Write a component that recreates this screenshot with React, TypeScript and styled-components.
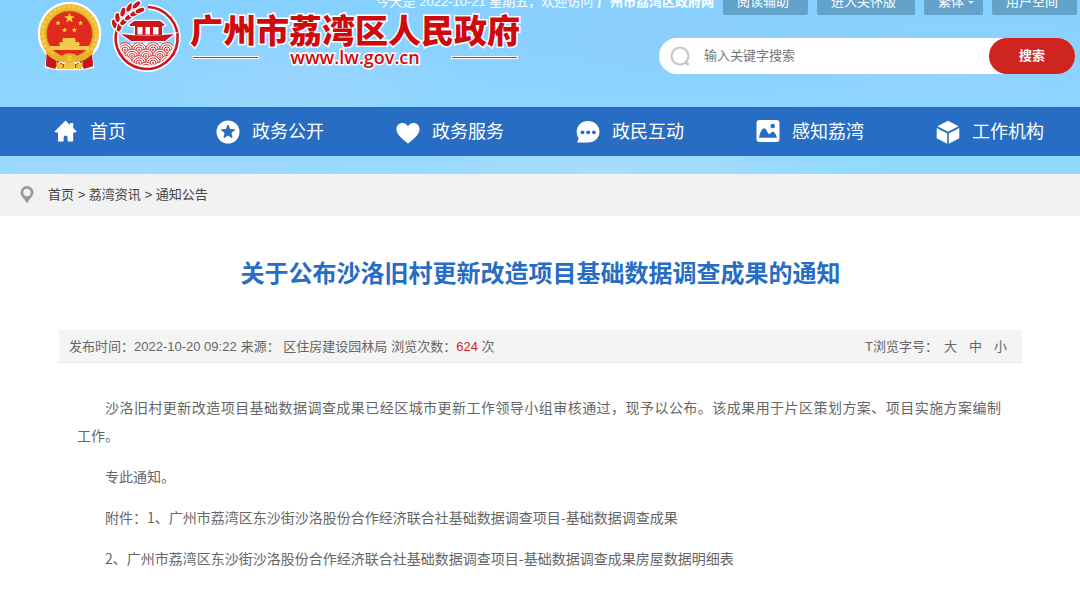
import React from "react";
import styled, { createGlobalStyle } from "styled-components";

const sans = `"Liberation Sans", "Noto Sans CJK SC", sans-serif`;
const cjk = `"Noto Sans CJK SC", sans-serif`;

const GlobalStyle = createGlobalStyle`
  *, *::before, *::after { box-sizing: border-box; }
  body { margin: 0; background: #fff; font-family: ${sans}; color: #666; }
  a { color: inherit; text-decoration: none; }
`;

const Header = styled.header`
  padding-bottom: 18px;
  background:
    radial-gradient(ellipse 200px 60px at 27% 50%, rgba(164, 214, 255, 0.6), transparent),
    radial-gradient(ellipse 260px 70px at 62% 22%, rgba(142, 205, 252, 0.7), transparent),
    radial-gradient(ellipse 240px 60px at 88% 40%, rgba(150, 208, 255, 0.6), transparent),
    radial-gradient(ellipse 340px 40px at 14% 100%, rgba(166, 218, 255, 0.9), transparent),
    radial-gradient(ellipse 300px 40px at 56% 100%, rgba(172, 222, 255, 0.9), transparent),
    linear-gradient(#86d0ff, #90daff);
`;

const TopBar = styled.div`
  display: flex;
  justify-content: flex-end;
  align-items: flex-end;
  gap: 9px;
  height: 15px;
  padding-right: 3px;
  overflow: hidden;
  font-size: 13px;
  line-height: 27px;
  color: #fff;
`;

const Greeting = styled.span`
  white-space: nowrap;
`;

const TopButton = styled.button<{ $menu?: boolean }>`
  height: 27px;
  padding: 0 ${(p) => (p.$menu ? 9 : 19)}px 0 14px;
  border: 0;
  border-radius: 2px;
  background: #63a2c9;
  color: #fff;
  font: 13px/27px ${sans};
  white-space: nowrap;
`;

const Caret = styled.span`
  display: inline-block;
  margin-left: 4px;
  vertical-align: middle;
  border: 3px solid transparent;
  border-top-color: #d4e6f1;
  border-bottom: 0;
`;

const Masthead = styled.div`
  display: flex;
  justify-content: space-between;
  height: 92px;
  padding: 0 5px 0 36px;
`;

const Brand = styled.a`
  display: flex;
  gap: 9px;
  margin-top: -15px;
`;

const Logo = styled.svg`
  flex: none;
  overflow: visible;
`;

const BrandText = styled.span`
  display: flex;
  flex-direction: column;
  padding-top: 10px;
  color: #cf0a0c;
  -webkit-text-stroke: 3px #fff;
  paint-order: stroke fill;
`;

const BrandName = styled.span`
  font: 900 33px/38px ${cjk};
  white-space: nowrap;
`;

const BrandUrl = styled.span`
  display: flex;
  align-items: center;
  justify-content: space-between;
  padding: 0 2px;
  font: 600 18px/18px "Open Sans", sans-serif;
`;

const Rule = styled.span`
  width: 67px;
  height: 3px;
  border: 1px solid #fff;
  background: #e02020;
`;

const Search = styled.form`
  display: flex;
  align-items: center;
  width: 416px;
  height: 36px;
  margin-top: 23px;
  padding-left: 10px;
  border-radius: 18px;
  background: #fff;
`;

const SearchInput = styled.input`
  flex: 1;
  min-width: 0;
  margin-left: 11px;
  padding: 0;
  border: 0;
  outline: 0;
  background: transparent;
  font: 13px/20px ${sans};
  &::placeholder { color: #777; opacity: 1; }
`;

const SearchButton = styled.button`
  width: 86px;
  height: 36px;
  border: 0;
  border-radius: 18px;
  background: #cf2520;
  color: #fff;
  font: 700 13px/20px ${sans};
`;

const Nav = styled.nav`
  display: grid;
  grid-template-columns: repeat(6, 1fr);
  background: #276dc3;
`;

const NavLink = styled.a`
  display: flex;
  align-items: center;
  justify-content: center;
  gap: 12px;
  height: 49px;
  color: #fff;
  font-size: 18px;
  line-height: 24px;
  white-space: nowrap;
`;

const Breadcrumb = styled.nav`
  display: flex;
  align-items: center;
  gap: 14px;
  height: 42px;
  padding: 0 20px;
  background: #f2f2f2;
  color: #444;
  font: 13px/18px ${sans};
`;

const Article = styled.article`
  padding: 36px 58px 23px 59px;
`;

const Title = styled.h1`
  margin: 0 0 38px;
  color: #276dc3;
  font: 700 24px/40px ${cjk};
  text-align: center;
`;

const Meta = styled.div`
  display: flex;
  justify-content: space-between;
  height: 33px;
  padding: 0 15px 0 10px;
  border-bottom: 1px solid #e9e9e9;
  background: #f4f4f4;
  font-size: 13px;
  line-height: 33px;
`;

const MetaGroup = styled.div<{ $gap: number }>`
  display: flex;
  gap: ${(p) => p.$gap}px;
`;

const Views = styled.span`
  color: #cf2520;
`;

const SizeButton = styled.button`
  padding: 0;
  border: 0;
  background: none;
  color: inherit;
  font: 13px/33px ${sans};
`;

const Body = styled.div`
  padding: 30px 21px 0 18px;
  color: #666;
  font: 14px/28px ${cjk};
`;

const Paragraph = styled.p`
  margin: 0 0 13px;
  text-indent: 2em;
  text-align: justify;
`;

const Together = styled.span`
  white-space: nowrap;
`;

function starPoints(cx: number, cy: number, r: number) {
  return Array.from({ length: 10 }, (_, i) => {
    const a = (Math.PI / 5) * i - Math.PI / 2;
    const d = i % 2 ? r * 0.42 : r;
    return `${(cx + d * Math.cos(a)).toFixed(2)},${(cy + d * Math.sin(a)).toFixed(2)}`;
  }).join(" ");
}

function NationalEmblem() {
  return (
    <Logo width="67" height="72" viewBox="-2 -3 67 72" aria-hidden="true">
      <path d="M31.500 0C14 0 1 14 1 31c0 9 4 16 9 21l-2 12 12 2h23l12-2-2-12c6-5 9-12 9-21C62 14 49 0 31.500 0Z" fill="#fff" stroke="#fff" strokeWidth="2.500" />
      <path d="M9 46 8 63l9 3 5-9h19l5 9 9-3-2-17Z" fill="#c8141c" />
      <circle cx="31.500" cy="30.500" r="29.500" fill="#edb92e" />
      <circle cx="31.500" cy="30.500" r="27" fill="none" stroke="#f5cc4a" strokeWidth="3" strokeDasharray="3 2" />
      <circle cx="31.500" cy="31" r="23" fill="#e02a1d" stroke="#c98a18" />
      <polygon points={starPoints(31.5, 15, 5.5)} fill="#fbd437" />
      {[[20, 20], [42.5, 20], [26.7, 27], [36.3, 27]].map(([x, y]) => (
        <polygon key={x} points={starPoints(x, y, 2.8)} fill="#fbd437" />
      ))}
      <path d="M25 35h12l1 3h-1v1h4l1 3h-1v1h10v4H12v-4h10v-1h-1l1-3h3v-1h-1Z" fill="#f7c94a" />
      <path d="M9 47c5 4 9 5 14 7 3-5 14-5 17 0 5-2 9-3 14-7l1 3c-4 5-9 8-15 9l-8-3-9 3C17 58 12 55 8 50Z" fill="#e7b22a" />
      <path d="m9 52 8 6-3 7-6-2Zm45 0-8 6 3 7 6-2Z" fill="#c8141c" />
      <path d="M18 58c3 4 7 4 9 2l-2 6h-6Zm27 0c-3 4-7 4-9 2l2 6h6ZM27 60l4-3 5 3 1 6H26Z" fill="#f3c63a" />
      <circle cx="31.500" cy="55.500" r="4" fill="#f3c63a" stroke="#d9a024" />
      <path d="m22 60 4 2-1 3m16-5-4 2 1 3" fill="none" stroke="#c8141c" />
    </Logo>
  );
}

const waves = [48, 54.5, 61, 67.5].flatMap((y, row) =>
  [0, 1, 2, 3, 4, 5].map((i) => ({ y, x: i * 14 - 1 + (row % 2) * 7 }))
);

const grains = [
  [2.5, 22, -18], [5.5, 15.5, -2], [11, 10, 18], [17.5, 5.5, 32], [24.5, 2.8, 48],
  [7.5, 25, 20], [12, 19.5, 48], [17, 15, 56], [22.5, 11.5, 64], [28, 8.5, 70],
];

function LiwanLogo() {
  return (
    <Logo width="69" height="72" viewBox="0 -2 69 72" aria-hidden="true">
      <clipPath id="disc"><circle cx="34.500" cy="36" r="29.500" /></clipPath>
      <g clipPath="url(#disc)">
        <path d="M0 46q34-10 69 0v30H0Z" fill="#fff" />
        {waves.map(({ x, y }) => (
          <g key={`${x}-${y}`} stroke="#d23a3c" strokeWidth="1" fill="#fff">
            <circle cx={x} cy={y} r="7.400" />
            <circle cx={x} cy={y} r="5.200" />
            <circle cx={x} cy={y} r="3" />
            <circle cx={x} cy={y} r="1" />
          </g>
        ))}
      </g>
      <path d="M36 5a31 31 0 1 1-31 22" fill="none" stroke="#fff" strokeWidth="6" />
      <path d="M36 5a31 31 0 1 1-31 22" fill="none" stroke="#c9151b" strokeWidth="2.600" />
      <g fill="#c9151b" stroke="#fff" strokeWidth="2.500" style={{ paintOrder: "stroke" }}>
        <path d="M9 32q25 3 53 0l-9 7H19Z M17 23l5-4h26l5 4-2 1H19Z M23 23h27v10H23Z" />
        {grains.map(([x, y, a]) => (
          <ellipse key={`${x}-${y}`} cx={x} cy={y} rx="2.200" ry="4.600" transform={`rotate(${a} ${x} ${y})`} />
        ))}
      </g>
      <path d="M25.500 25h5v7.500h-5ZM33.500 25h4.500v7.500h-4.500ZM41 25h5.500v7.500H41Z" fill="#fff" />
    </Logo>
  );
}

const iconProps = { width: 24, height: 24, viewBox: "0 0 24 24", fill: "#fff", "aria-hidden": true } as const;

const navItems = [
  {
    label: "首页",
    icon: <path d="M11.500.5.5 11.500l1.200 1H4V21.500h5.600v-4a2 2 0 0 1 4 0v4h5.600v-9h2.300l1.200-1-3.500-3.500V3h-3.200v2Z" />,
  },
  {
    label: "政务公开",
    icon: <><circle cx="12" cy="12" r="11.500" /><polygon points={starPoints(12, 12, 7)} fill="#276dc3" stroke="#276dc3" strokeLinejoin="round" /></>,
  },
  {
    label: "政务服务",
    icon: <path d="M12 23.500C8 20 .5 15 .5 9.200.5 5.500 3 3 6.200 3 9 3 11 4.500 12 6.500 13 4.500 15 3 17.800 3 21 3 23.500 5.500 23.500 9.200 23.500 15 16 20 12 23.500Z" />,
  },
  {
    label: "政民互动",
    icon: (
      <>
        <path d="M12 1C5.500 1 .7 5.700.7 11.800c0 2.700.9 4.800 2 6.600L1 22.600h11c6.500 0 11.500-4.700 11.500-10.800S18.500 1 12 1Z" />
        <g fill="#276dc3"><circle cx="6.500" cy="12.300" r="1.900" /><circle cx="12.200" cy="12.300" r="1.900" /><circle cx="17.900" cy="12.300" r="1.900" /></g>
      </>
    ),
  },
  {
    label: "感知荔湾",
    icon: (
      <>
        <rect x=".5" width="23" height="22" rx="3" />
        <path d="M3 17.800c1-5 3-9.600 5.200-9.600 2.400 0 3.300 5.800 5 5.800 1.300 0 2-2.300 3.500-2.300 2 0 3.600 3.300 4.300 6.100Z" fill="#276dc3" />
        <circle cx="16.700" cy="6" r="2.300" fill="#276dc3" />
      </>
    ),
  },
  {
    label: "工作机构",
    icon: <path d="m12 .8 10.500 5.400L12 11.700 1.500 6.200ZM.7 8l10.500 5.400v10.300L.7 18.200Zm22.600 0-10.500 5.400v10.300l10.500-5.500Z" />,
  },
];

export default function App() {
  return (
    <>
      <GlobalStyle />
      <Header>
        <TopBar>
          <Greeting>今天是 2022-10-21 星期五，欢迎访问 <b>广州市荔湾区政府网</b></Greeting>
          <TopButton>阅读辅助</TopButton>
          <TopButton>进入关怀版</TopButton>
          <TopButton $menu>繁体<Caret /></TopButton>
          <TopButton>用户空间</TopButton>
        </TopBar>
        <Masthead>
          <Brand href="#">
            <NationalEmblem />
            <LiwanLogo />
            <BrandText>
              <BrandName>广州市荔湾区人民政府</BrandName>
              <BrandUrl><Rule />www.lw.gov.cn<Rule /></BrandUrl>
            </BrandText>
          </Brand>
          <Search onSubmit={(e) => e.preventDefault()}>
            <svg width="24" height="24" viewBox="0 0 24 24" fill="none" stroke="#c4c4c4" strokeWidth="2" aria-hidden="true">
              <circle cx="11" cy="12" r="8.500" />
              <path d="m16 17.500 3.500 3.500" strokeWidth="2.500" />
            </svg>
            <SearchInput aria-label="输入关键字搜索" placeholder="输入关键字搜索" />
            <SearchButton>搜索</SearchButton>
          </Search>
        </Masthead>
        <Nav>
          {navItems.map(({ label, icon }) => (
            <NavLink key={label} href="#"><svg {...iconProps}>{icon}</svg>{label}</NavLink>
          ))}
        </Nav>
      </Header>
      <Breadcrumb>
        <svg width="14" height="18" viewBox="0 0 14 18" aria-hidden="true">
          <path d="M7 0a6.500 6.500 0 0 0-6.500 6.500C.5 10.500 5 13 7 17.500 9 13 13.500 10.500 13.500 6.500A6.500 6.500 0 0 0 7 0Zm0 2.800a3.700 3.700 0 1 1 0 7.400 3.700 3.700 0 0 1 0-7.400Z" fill="#999" />
        </svg>
        <span><a href="#">首页</a> &gt; <a href="#">荔湾资讯</a> &gt; <a href="#">通知公告</a></span>
      </Breadcrumb>
      <Article>
        <Title>关于公布沙洛旧村更新改造项目基础数据调查成果的通知</Title>
        <Meta>
          <MetaGroup $gap={4}>
            <span>发布时间：2022-10-20 09:22</span>
            <span>来源： 区住房建设园林局</span>
            <span>浏览次数：<Views>624</Views> 次</span>
          </MetaGroup>
          <MetaGroup $gap={6}>
            <span>T浏览字号：</span>
            <MetaGroup $gap={12}>
              <SizeButton>大</SizeButton>
              <SizeButton>中</SizeButton>
              <SizeButton>小</SizeButton>
            </MetaGroup>
          </MetaGroup>
        </Meta>
        <Body>
          <Paragraph>
            沙洛旧村更新改造项目基础数据调查成果已经区城市更新工作领导小组审核通过，现予以公布。该成果用于片区策划方案、项目实施方案编制<Together>工作。</Together>
          </Paragraph>
          <Paragraph>专此通知。</Paragraph>
          <Paragraph>附件：1、广州市荔湾区东沙街沙洛股份合作经济联合社基础数据调查项目-基础数据调查成果</Paragraph>
          <Paragraph>2、广州市荔湾区东沙街沙洛股份合作经济联合社基础数据调查项目-基础数据调查成果房屋数据明细表</Paragraph>
        </Body>
      </Article>
    </>
  );
}
